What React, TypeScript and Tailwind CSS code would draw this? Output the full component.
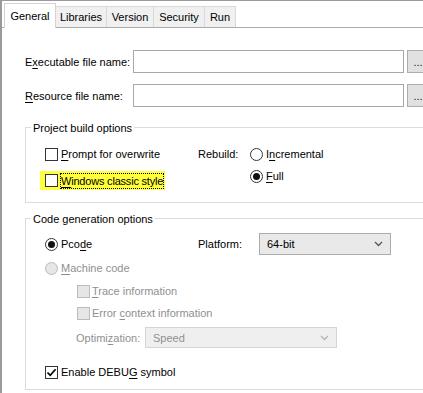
import React from "react";

function U({ children }: { children: React.ReactNode }) {
  return <span className="underline decoration-1 underline-offset-[2px]">{children}</span>;
}

function Box({ checked, disabled }: { checked?: boolean; disabled?: boolean }) {
  return (
    <span
      className={
        disabled
          ? "w-[13px] h-[13px] border border-[#bcbcbc] bg-[#e6e6e6] flex items-center justify-center shrink-0"
          : "w-[13px] h-[13px] border border-[#333333] bg-white flex items-center justify-center shrink-0"
      }
    >
      {checked && (
        <svg width="11" height="11" viewBox="0 0 11 11">
          <path d="M1.5 5.5 L4.2 8.3 L9.6 2.2" fill="none" stroke="#000" strokeWidth="1.7" />
        </svg>
      )}
    </span>
  );
}

function Radio({ checked, disabled }: { checked?: boolean; disabled?: boolean }) {
  return (
    <span
      className={
        disabled
          ? "w-[13px] h-[13px] rounded-full border border-[#bcbcbc] bg-[#e6e6e6] flex items-center justify-center shrink-0"
          : "w-[13px] h-[13px] rounded-full border border-[#333333] bg-white flex items-center justify-center shrink-0"
      }
    >
      {checked && <span className="w-[7px] h-[7px] rounded-full bg-[#111]" />}
    </span>
  );
}

function Chevron({ color }: { color: string }) {
  return (
    <svg width="9" height="6" viewBox="0 0 9 6">
      <path d="M1 1 L4.5 4.5 L8 1" fill="none" stroke={color} strokeWidth="1.3" />
    </svg>
  );
}

export default function App() {
  return (
    <div className="w-[423px] h-[393px] overflow-hidden whitespace-nowrap bg-white border-t border-l-2 border-[#9a9a9a] text-[11px] leading-[16px] text-black font-['Liberation_Sans',Arial,sans-serif]">
      {/* tab strip */}
      <div className="h-[27px] flex items-end pl-[2px] border-b border-[#acacac]">
        <div className="relative z-10 -mb-px h-[25px] w-[52px] bg-white border-l border-t border-r border-[#d4d4d4] flex items-center justify-center">
          General
        </div>
        <div className="-ml-px h-[21px] w-[52px] bg-[#f0f0f0] border-l border-t border-r border-[#d9d9d9] flex items-center justify-center">
          Libraries
        </div>
        <div className="-ml-px h-[21px] w-[48px] bg-[#f0f0f0] border-l border-t border-r border-[#d9d9d9] flex items-center justify-center">
          Version
        </div>
        <div className="-ml-px h-[21px] w-[52px] bg-[#f0f0f0] border-l border-t border-r border-[#d9d9d9] flex items-center justify-center">
          Security
        </div>
        <div className="-ml-px h-[21px] w-[32px] bg-[#f0f0f0] border-l border-t border-r border-[#d9d9d9] flex items-center justify-center">
          Run
        </div>
      </div>

      {/* panel */}
      <div className="flex flex-col pl-[23px]">
        {/* file rows */}
        <div className="mt-[22px] h-[23px] flex items-center">
          <span className="w-[108px] shrink-0">
            E<U>x</U>ecutable file name:
          </span>
          <div className="w-[271px] h-[23px] border border-[#a8a8a8] bg-white shrink-0" />
          <div className="ml-[3px] w-[22px] h-[23px] border border-[#adadad] bg-[#e1e1e1] shrink-0 flex items-center justify-center text-[#222]">
            ...
          </div>
        </div>
        <div className="mt-[11px] h-[23px] flex items-center">
          <span className="w-[108px] shrink-0">
            <U>R</U>esource file name:
          </span>
          <div className="w-[271px] h-[23px] border border-[#a8a8a8] bg-white shrink-0" />
          <div className="ml-[3px] w-[22px] h-[23px] border border-[#adadad] bg-[#e1e1e1] shrink-0 flex items-center justify-center text-[#222]">
            ...
          </div>
        </div>

        {/* Project build options */}
        <div className="mt-[20px] w-[420px] h-[76px] border border-[#dcdcdc] flex flex-col">
          <div className="-mt-[8px] ml-[5px] px-[2px] w-fit h-[16px] bg-white">Project build options</div>
          <div className="flex pl-[19px]">
            <div className="w-[153px] flex flex-col">
              <div className="mt-[8px] h-[20px] flex items-center">
                <Box />
                <span className="ml-[3px]">
                  <U>P</U>rompt for overwrite
                </span>
              </div>
              <div className="mt-[7px] -ml-[5px] pl-[5px] pr-[1px] h-[19px] w-fit bg-[#ffff3c] flex items-center">
                <Box />
                <span className="ml-[2px] border border-dotted border-black leading-[14px] tracking-[-0.2px]">
                  <U>W</U>indows classic style
                </span>
              </div>
            </div>
            <div className="w-[52px] mt-[8px] h-[20px] flex items-center">Rebuild:</div>
            <div className="flex flex-col">
              <div className="mt-[8px] h-[20px] flex items-center">
                <Radio />
                <span className="ml-[3px]">
                  I<U>n</U>cremental
                </span>
              </div>
              <div className="mt-[2px] h-[20px] flex items-center">
                <Radio checked />
                <span className="ml-[3px]">
                  <U>F</U>ull
                </span>
              </div>
            </div>
          </div>
        </div>

        {/* Code generation options */}
        <div className="mt-[15px] w-[420px] h-[172px] border border-[#dcdcdc] flex flex-col">
          <div className="-mt-[8px] ml-[5px] px-[2px] w-fit h-[16px] bg-white">Code generation options</div>
          <div className="mt-[6px] h-[22px] flex items-center pl-[19px]">
            <div className="w-[153px] flex items-center">
              <Radio checked />
              <span className="ml-[3px]">
                Pco<U>d</U>e
              </span>
            </div>
            <span className="w-[61px]">Platform:</span>
            <div className="w-[132px] h-[22px] border border-[#acacac] bg-[#e9e9e9] flex items-center justify-between pl-[7px] pr-[7px]">
              <span>64-bit</span>
              <Chevron color="#555" />
            </div>
          </div>
          <div className="mt-[3px] h-[20px] flex items-center pl-[19px] text-[#8f8f8f]">
            <Radio disabled />
            <span className="ml-[3px]">
              <U>M</U>achine code
            </span>
          </div>
          <div className="mt-[3px] h-[20px] flex items-center pl-[51px] text-[#8f8f8f]">
            <Box disabled />
            <span className="ml-[2px]">
              <U>T</U>race information
            </span>
          </div>
          <div className="mt-[2px] h-[20px] flex items-center pl-[51px] text-[#8f8f8f]">
            <Box disabled />
            <span className="ml-[2px]">
              Error <U>c</U>ontext information
            </span>
          </div>
          <div className="mt-[4px] h-[21px] flex items-center pl-[50px] text-[#8f8f8f]">
            <span className="w-[69px]">
              Optimi<U>z</U>ation:
            </span>
            <div className="w-[192px] h-[21px] border border-[#d5d5d5] bg-[#efefef] flex items-center justify-between pl-[7px] pr-[7px]">
              <span>Speed</span>
              <Chevron color="#b5b5b5" />
            </div>
          </div>
          <div className="mt-[14px] h-[20px] flex items-center pl-[19px]">
            <Box checked />
            <span className="ml-[3px]">
              Enable DEBU<U>G</U> symbol
            </span>
          </div>
        </div>
      </div>
    </div>
  );
}
